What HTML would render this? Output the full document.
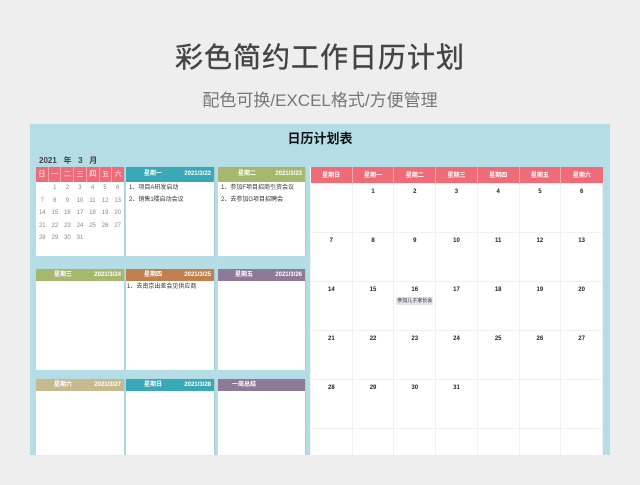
<!DOCTYPE html>
<html><head><meta charset="utf-8"><style>
*{margin:0;padding:0;box-sizing:border-box}
body{width:640px;height:485px;background:#eeeeee;font-family:"Liberation Sans","Noto Sans CJK SC",sans-serif;position:relative;overflow:hidden}
.a{position:absolute}
.t1{left:0;width:640px;top:36px;text-align:center;font-size:28px;color:#444;letter-spacing:1px;-webkit-text-stroke:0.4px #444}
.t2{left:0;width:640px;top:86px;text-align:center;font-size:17px;color:#777}
.panel{left:30px;top:124px;width:580px;height:331px;background:#b5dde6}
.card{background:#fff;box-shadow:1px 0 1px rgba(0,0,0,0.08)}
.hd{height:14px;color:#fff;font-size:6px;font-weight:bold;line-height:14px}
.hd span{position:absolute}
.it{font-size:6px;color:#333;line-height:12px;padding-left:3px}
.mini td{font-size:6px;color:#888;text-align:center;height:12.5px;width:12.4px}
.big{border-collapse:collapse}
.big th{background:#ef6b77;color:#fff;font-size:6px;height:16px;width:41.9px;border-right:1px solid #f7a5ad}
.big td{border:1px solid #f1f1f1;vertical-align:top;text-align:center;font-size:6px;font-weight:bold;color:#222;padding-top:5px;background:#fff}
</style></head><body>
<div class="a t1">彩色简约工作日历计划</div>
<div class="a t2">配色可换/EXCEL格式/方便管理</div>
<div class="a panel"></div>
<div class="a" style="left:30px;top:128px;width:580px;text-align:center;font-size:13px;font-weight:bold;color:#111">日历计划表</div>
<div class="a" style="left:39px;top:155px;font-size:8px;font-weight:bold;color:#444">2021 &nbsp; 年 &nbsp; 3 &nbsp; 月</div>

<div class="a card" style="left:36px;top:167px;width:88px;height:89px">
<div style="display:flex;height:15px">
<div style="flex:1;background:#ef6b77;color:#fff;font-size:7px;text-align:center;line-height:15px;border-right:1px solid #f7a5ad">日</div><div style="flex:1;background:#ef6b77;color:#fff;font-size:7px;text-align:center;line-height:15px;border-right:1px solid #f7a5ad">一</div><div style="flex:1;background:#ef6b77;color:#fff;font-size:7px;text-align:center;line-height:15px;border-right:1px solid #f7a5ad">二</div><div style="flex:1;background:#ef6b77;color:#fff;font-size:7px;text-align:center;line-height:15px;border-right:1px solid #f7a5ad">三</div><div style="flex:1;background:#ef6b77;color:#fff;font-size:7px;text-align:center;line-height:15px;border-right:1px solid #f7a5ad">四</div><div style="flex:1;background:#ef6b77;color:#fff;font-size:7px;text-align:center;line-height:15px;border-right:1px solid #f7a5ad">五</div><div style="flex:1;background:#ef6b77;color:#fff;font-size:7px;text-align:center;line-height:15px">六</div>
</div>
<table class="mini" style="border-collapse:collapse;width:88px">
<tr><td></td><td>1</td><td>2</td><td>3</td><td>4</td><td>5</td><td>6</td></tr>
<tr><td>7</td><td>8</td><td>9</td><td>10</td><td>11</td><td>12</td><td>13</td></tr>
<tr><td>14</td><td>15</td><td>16</td><td>17</td><td>18</td><td>19</td><td>20</td></tr>
<tr><td>21</td><td>22</td><td>23</td><td>24</td><td>25</td><td>26</td><td>27</td></tr>
<tr><td>28</td><td>29</td><td>30</td><td>31</td><td></td><td></td><td></td></tr>
</table></div>

<div class="a card" style="left:126px;top:167px;width:88px;height:89px"><div class="hd a" style="left:0;top:0;width:88px;height:15px;background:#3aa9b7"><span style="left:18px">星期一</span><span style="right:3px">2021/3/22</span></div><div class="it" style="padding-top:15px">1、项目A研发启动<br>2、销售1楼启动会议</div></div>
<div class="a card" style="left:218px;top:167px;width:87px;height:89px"><div class="hd a" style="left:0;top:0;width:87px;height:15px;background:#a5b86d"><span style="left:20px">星期二</span><span style="right:3px">2021/3/23</span></div><div class="it" style="padding-top:15px">1、参加F项目招商引资会议<br>2、去参加G项目招聘会</div></div>

<div class="a card" style="left:36px;top:269px;width:88px;height:101px"><div class="hd a" style="left:0;top:0;width:88px;height:12px;line-height:12px;background:#a5b86d"><span style="left:18px">星期三</span><span style="right:3px">2021/3/24</span></div></div>
<div class="a card" style="left:126px;top:269px;width:88px;height:101px"><div class="hd a" style="left:0;top:0;width:88px;height:12px;line-height:12px;background:#c07f4c"><span style="left:18px">星期四</span><span style="right:3px">2021/3/25</span></div><div class="it" style="padding-top:12px;padding-left:1px">1、去南京出差会见供应商</div></div>
<div class="a card" style="left:218px;top:269px;width:87px;height:101px"><div class="hd a" style="left:0;top:0;width:87px;height:12px;line-height:12px;background:#8e7a98"><span style="left:17px">星期五</span><span style="right:3px">2021/3/26</span></div></div>

<div class="a card" style="left:36px;top:379px;width:88px;height:76px"><div class="hd a" style="left:0;top:0;width:88px;height:12px;line-height:12px;background:#c7b98e"><span style="left:18px">星期六</span><span style="right:3px">2021/3/27</span></div></div>
<div class="a card" style="left:126px;top:379px;width:88px;height:76px"><div class="hd a" style="left:0;top:0;width:88px;height:12px;line-height:12px;background:#3aa9b7"><span style="left:18px">星期日</span><span style="right:3px">2021/3/28</span></div></div>
<div class="a card" style="left:218px;top:379px;width:87px;height:76px"><div class="hd a" style="left:0;top:0;width:87px;height:12px;line-height:12px;background:#8e7a98"><span style="left:14px">一周总结</span></div></div>

<div class="a" style="left:310px;top:167px;width:293px;height:288px;background:#fff;overflow:hidden">
<table class="big">
<tr><th>星期日</th><th>星期一</th><th>星期二</th><th>星期三</th><th>星期四</th><th>星期五</th><th style="border-right:none">星期六</th></tr>
<tr style="height:49px"><td></td><td>1</td><td>2</td><td>3</td><td>4</td><td>5</td><td>6</td></tr>
<tr style="height:49px"><td>7</td><td>8</td><td>9</td><td>10</td><td>11</td><td>12</td><td>13</td></tr>
<tr style="height:49px"><td>14</td><td>15</td><td>16<div style="margin:4px 2px 0;background:#e3e5ee;font-size:5px;font-weight:normal;color:#333;line-height:8px">参加儿子家长会</div></td><td>17</td><td>18</td><td>19</td><td>20</td></tr>
<tr style="height:49px"><td>21</td><td>22</td><td>23</td><td>24</td><td>25</td><td>26</td><td>27</td></tr>
<tr style="height:49px"><td>28</td><td>29</td><td>30</td><td>31</td><td></td><td></td><td></td></tr>
<tr style="height:40px"><td></td><td></td><td></td><td></td><td></td><td></td><td></td></tr>
</table></div>
</body></html>
